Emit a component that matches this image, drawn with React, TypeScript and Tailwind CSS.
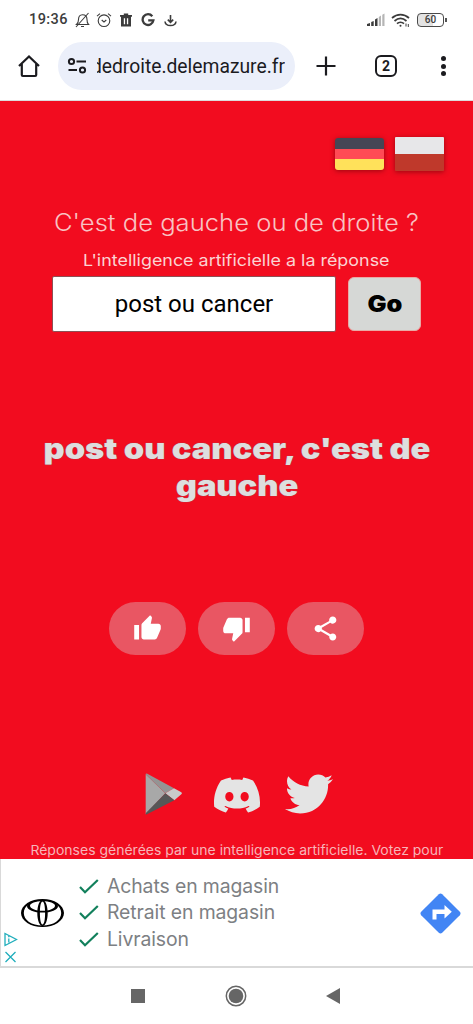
import type { ReactNode } from "react";
import { MdShare, MdThumbDown, MdThumbUp } from "react-icons/md";
import { FaTwitter } from "react-icons/fa";
import { SiDiscord } from "react-icons/si";

function StatusBar() {
  return (
    <div className="flex h-10 items-center pl-[29px] pr-[26px] text-[#3c3c3c]">
      <span className="w-[39px] whitespace-nowrap font-[Roboto,sans-serif] text-[14.500px] font-medium tracking-[0.4px]">19:36</span>
      <svg className="ml-[7px]" width="15" height="16" viewBox="0 0 15 16" fill="none" stroke="currentColor" strokeWidth="1.1">
        <path d="M1.5 12.5h12c-1.3-1.2-1.5-2.4-1.5-5C12 4.700 10.300 2.700 7.500 2.700S3.500 4.700 3.500 7.500c0 2.600-.5 3.800-2 5zM6 14.500h3M1 15 13.500 1" />
      </svg>
      <svg className="ml-[6px]" width="16" height="16" viewBox="0 0 16 16" fill="none" stroke="currentColor" strokeWidth="1.1">
        <circle cx="8" cy="8.700" r="5.800" />
        <path d="M1 4.200 4 1.700M15 4.200l-3-2.500M5.700 8l2.300 2 2.300-2" />
      </svg>
      <svg className="ml-[8px]" width="12" height="14" viewBox="0 0 12 14" fill="currentColor">
        <path fillRule="evenodd" d="M0 2h3.800V.5h4.400V2H12v1.700h-1V13.500H1V3.700H0zM3.800 5.200v6h1.300v-6zM6.900 5.200v6h1.300v-6z" />
      </svg>
      <svg className="ml-[9px]" width="14" height="14" viewBox="0 0 14 14" fill="none" stroke="currentColor" strokeWidth="2.300">
        <path d="M11.300 3.200A5.400 5.400 0 1 0 12.400 7.400H7.200" />
      </svg>
      <svg className="ml-[9px]" width="13" height="13" viewBox="0 0 13 13" fill="none" stroke="currentColor" strokeWidth="1.600">
        <path d="M6.500 1v7M3.800 5.600 6.500 8.300l2.700-2.700M1 7.500c.6 5.400 10.400 5.400 11 0" />
      </svg>
      <svg className="ml-auto" width="18" height="14" viewBox="0 0 18 14">
        <path fill="#3c3c3c" d="M0 13v-2l3-1v3zM4.200 13V9l2.500-1v5zM8 13V6.500L10.500 5v8z" />
        <path fill="#b5b5b5" d="M11.800 13V4L14 2.500V13zM15.300 13V1.700L17.500.5V13z" />
      </svg>
      <svg className="ml-[6px]" width="19" height="15" viewBox="0 0 19 15" fill="none" stroke="currentColor" strokeWidth="1.700">
        <path d="M1 5c5-4.600 12-4.600 17 0M3.500 8c3.700-3.300 8.300-3.300 12 0M6 10.700c2-1.900 5-1.900 7 0" />
        <circle cx="9.500" cy="12.800" r="1" fill="currentColor" stroke="none" />
        <path strokeWidth="1" d="M15 10.500v3M17.300 11v3" />
      </svg>
      <div className="ml-[7px] flex h-[14px] w-[27px] items-center justify-center rounded-[4px] border-[1.500px] border-[#4a4a4a] bg-linear-to-r from-[#e3e3e3] from-60% to-white to-60% font-[Roboto,sans-serif] text-[10px] font-medium leading-none">60</div>
      <div className="ml-px h-[4px] w-[2px] bg-[#555]" />
    </div>
  );
}

function Toolbar() {
  return (
    <div className="flex h-[61px] items-start border-b border-[#dcdcdc] pl-[18px] text-[#1b1b1f]">
      <svg className="mt-[14px]" width="23" height="24" viewBox="0 0 23 24" fill="none" stroke="currentColor" strokeWidth="2.200">
        <path d="M1 12 11 2.500 21 12M3.800 10v11a1 1 0 0 0 1 1h12.400a1 1 0 0 0 1-1V10" />
      </svg>
      <div className="ml-[17px] mt-[2px] flex h-[48px] w-[237px] items-center rounded-full bg-[#ebeffa] pl-[9px]">
        <svg width="20" height="18" viewBox="0 0 20 18" fill="none" stroke="currentColor" strokeWidth="2">
          <circle cx="4.500" cy="4.500" r="2.600" />
          <circle cx="15.500" cy="13" r="2.600" />
          <path d="M9.500 4.500H19M1.500 13H10" />
        </svg>
        <div className="ml-[10px] mt-[2px] flex w-[188px] justify-end overflow-hidden whitespace-nowrap font-[Roboto,sans-serif] text-[19.300px] leading-[28px]">
          dedroite.delemazure.fr
        </div>
      </div>
      <svg className="ml-[21px] mt-[16px]" width="20" height="20" viewBox="0 0 20 20" stroke="currentColor" strokeWidth="2.200">
        <path d="M10 .500v19M.500 10h19" />
      </svg>
      <div className="ml-[39px] mt-[15px] flex h-[22px] w-[22px] items-center justify-center rounded-[6px] border-2 border-[#1b1b1f] font-[Roboto,sans-serif] text-[14px] font-bold leading-none">2</div>
      <div className="ml-[44px] mt-[16px] flex flex-col gap-[2.500px]">
        <i className="h-[5px] w-[5px] rounded-full bg-[#1b1b1f]" />
        <i className="h-[5px] w-[5px] rounded-full bg-[#1b1b1f]" />
        <i className="h-[5px] w-[5px] rounded-full bg-[#1b1b1f]" />
      </div>
    </div>
  );
}

function Vote({ children }: { children: ReactNode }) {
  return <button className="flex h-[53px] w-[77px] items-center justify-center rounded-full bg-[#e95663] text-white">{children}</button>;
}

function PlayLogo() {
  return (
    <svg width="38" height="42" viewBox="0 0 114 126">
      <path fill="#a8a8a8" d="M2 4v120l59-63z" />
      <path fill="#949494" d="M2 4q0-4 5-2l80 44-26 15z" />
      <path fill="#c9c9c9" d="m87 46 22 12q4 3 0 6L88 82 61 61z" />
      <path fill="#575757" d="m61 61 27 21-82 42q-4 2-4-3z" />
    </svg>
  );
}

function Page() {
  return (
    <main className="flex h-[758px] flex-col items-center overflow-hidden bg-[#f20c1f] font-[Inter,sans-serif] text-[#dedede]">
      <div className="mt-[36px] flex gap-[11px] self-end pr-[29px]">
        <div className="mt-px flex h-[32px] w-[49px] flex-col overflow-hidden rounded-[3px] shadow-[0_1px_5px_rgba(70,0,0,0.5)]">
          <div className="flex-1 bg-[#464655]" />
          <div className="flex-1 bg-[#ff4b55]" />
          <div className="flex-1 bg-[#ffe15a]" />
        </div>
        <div className="flex h-[34px] w-[49px] flex-col overflow-hidden rounded-[1px] shadow-[0_1px_5px_rgba(70,0,0,0.5)]">
          <div className="flex-1 bg-[#e7e7e9]" />
          <div className="flex-1 bg-[#bf392b]" />
        </div>
      </div>
      <h1 className="mt-[36px] h-[32px] origin-center scale-x-[1.090] whitespace-nowrap text-[23.500px] font-light leading-[32px] text-[#f8c3c3]">
        C'est de gauche ou de droite ?
      </h1>
      <p className="mt-[9px] h-[24px] origin-center scale-x-[1.085] whitespace-nowrap text-[16.500px] leading-[24px] text-[#fbd3d3]">
        L'intelligence artificielle a la réponse
      </p>
      <div className="mt-[4px] flex items-center gap-[12px]">
        <div className="flex h-[56px] w-[284px] items-center justify-center rounded-[2px] border border-[#8d5055] bg-white font-[Roboto,sans-serif] text-[24px] text-black">
          post ou cancer
        </div>
        <button className="flex h-[54px] w-[73px] items-center justify-center rounded-[6px] border border-[#e9aaa5] bg-[#d6d8d6] text-[23px] font-black text-black">
          <span className="origin-center scale-x-[1.100]">Go</span>
        </button>
      </div>
      <h2 className="mt-[99px] h-[74px] origin-center scale-x-[1.165] text-center text-[28px] font-black leading-[37px] [text-shadow:0_0_1px_#777]">
        post ou cancer, c'est de
        <br />
        gauche
      </h2>
      <div className="mt-[97px] flex gap-[12px]">
        <Vote><MdThumbUp size={29} /></Vote>
        <Vote><MdThumbDown size={29} /></Vote>
        <Vote><MdShare size={29} /></Vote>
      </div>
      <div className="mt-[116px] flex h-[46px] items-center gap-[25px] self-start pl-[145px] text-[#e4e4e4]">
        <PlayLogo />
        <SiDiscord className="ml-[6px] mt-[2px]" size={46} />
        <FaTwitter size={48} />
      </div>
      <p className="mt-[23px] h-[20px] origin-center scale-x-[1.076] whitespace-nowrap text-[13px] leading-[20px] text-[#f7b5b9]">
        Réponses générées par une intelligence artificielle. Votez pour
      </p>
    </main>
  );
}

function Check({ children }: { children: ReactNode }) {
  return (
    <li className="flex h-[26.500px] items-center gap-[8px]">
      <svg width="20" height="15" viewBox="0 0 20 15" fill="none" stroke="#12805c" strokeWidth="2.200">
        <path d="m1 8 5 5.200L18.800 1" />
      </svg>
      <span className="whitespace-nowrap">{children}</span>
    </li>
  );
}

function Ad() {
  return (
    <aside className="flex h-[109px] border-b-2 border-l border-[#d9d9d9] bg-white">
      <div className="flex w-[20px] flex-col items-start pl-[3px] pt-[73px]">
        <svg width="14" height="15" viewBox="0 0 14 15" fill="none" stroke="#20aebc" strokeWidth="1.300">
          <path d="M1 1.500v12L12.500 7.500zM4.800 6.500v4M4.800 4v1.300" />
        </svg>
        <svg className="mt-[4px]" width="13" height="12" viewBox="0 0 13 12" stroke="#20aebc" strokeWidth="1.300">
          <path d="m1.500 1 10 10M11.500 1l-10 10" />
        </svg>
      </div>
      <svg className="mt-[40px] shrink-0" width="43" height="28" viewBox="0 0 43 28">
        <path fillRule="evenodd" d="M21.500 0C33.300 0 43 6.200 43 14s-9.700 14-21.500 14S0 21.800 0 14 9.700 0 21.500 0zM21.500 1.500C10.500 1.500 2.800 7 2.800 14s7.700 12.500 18.700 12.500S40.200 21 40.200 14 32.500 1.500 21.500 1.500z" />
        <path fillRule="evenodd" d="M21.500 1c8.500 0 15.500 2.700 15.500 6.200s-7 6.400-15.500 6.400S6 10.700 6 7.200 13 1 21.500 1zM21.500 2.200C14.500 2.200 9 4 9 6.700s5.500 5.100 12.500 5.100S34 9.400 34 6.700 28.500 2.200 21.500 2.200z" />
        <path fillRule="evenodd" d="M21.500 1c3 0 5.200 5.700 5.200 13s-2.200 13-5.200 13-5.200-5.700-5.200-13 2.200-13 5.200-13zM21.500 2.500c-1.700 0-2.600 5-2.600 11.500s.9 11.500 2.600 11.500 2.600-5 2.600-11.500-.9-11.500-2.600-11.500z" />
      </svg>
      <ul className="ml-[15px] mt-[14px] font-[Inter,sans-serif] text-[19.400px] text-[#7d8083] tracking-[-0.100px]">
        <Check>Achats en magasin</Check>
        <Check>Retrait en magasin</Check>
        <Check>Livraison</Check>
      </ul>
      <svg className="ml-auto mr-[12px] mt-[34px]" width="41" height="41" viewBox="0 0 41 41">
        <path fill="#4285f4" d="M18.800 1.200q1.700-1.500 3.400 0l17.600 17.600q1.500 1.700 0 3.400L22.200 39.800q-1.700 1.500-3.400 0L1.200 22.200q-1.500-1.700 0-3.400z" />
        <path fill="#fff" d="M12.500 26.500v-10h12V12l7.300 6.800-7.300 6.800V21h-8v5.500z" />
      </svg>
    </aside>
  );
}

export default function App() {
  return (
    <div className="flex h-[1024px] w-[473px] flex-col overflow-hidden bg-white">
      <StatusBar />
      <Toolbar />
      <Page />
      <Ad />
      <nav className="flex flex-1 items-center pl-[131px] text-[#666]">
        <div className="h-[14px] w-[14px] bg-[#666]" />
        <svg className="ml-[80px]" width="22" height="22" viewBox="0 0 22 22">
          <circle cx="11" cy="11" r="9.700" fill="none" stroke="#666" strokeWidth="1.500" />
          <circle cx="11" cy="11" r="7.300" fill="#666" />
        </svg>
        <svg className="ml-[79px]" width="14" height="16" viewBox="0 0 14 16" fill="#666">
          <path d="M14 0v16L0 8z" />
        </svg>
      </nav>
    </div>
  );
}
